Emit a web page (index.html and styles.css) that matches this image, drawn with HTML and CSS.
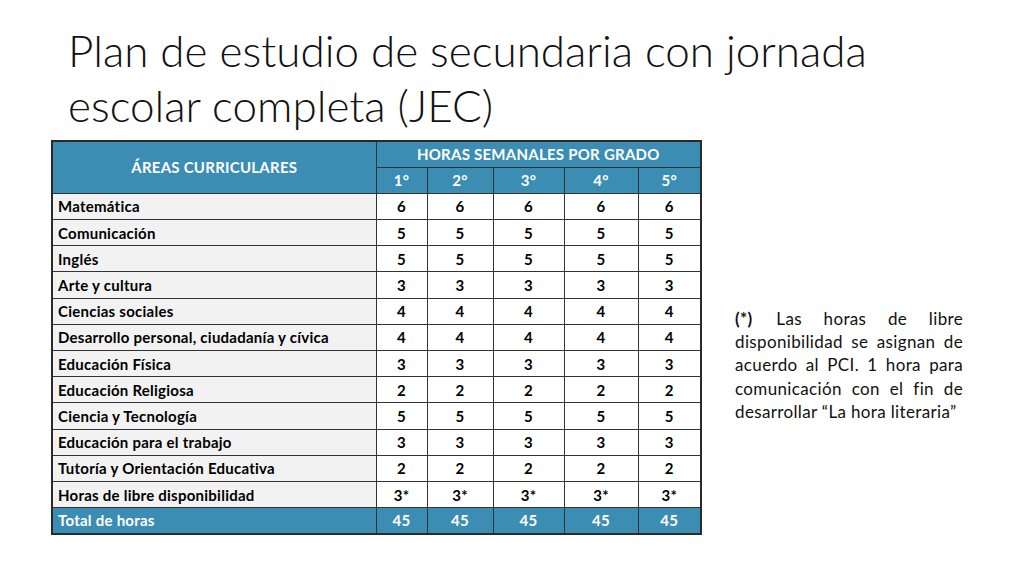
FILE: index.html
```html
<!DOCTYPE html>
<html lang="es">
<head>
<meta charset="utf-8">
<title>Plan de estudio JEC</title>
<link rel="stylesheet" href="styles.css">
</head>
<body>
<div class="slide">
  <h1 class="title">Plan de estudio de secundaria con jornada<br>escolar completa (JEC)</h1>
  <div class="content">
    <table class="plan">
      <colgroup>
        <col class="c-area"><col class="c1"><col class="c2"><col class="c3"><col class="c4"><col class="c5">
      </colgroup>
      <thead>
        <tr><th rowspan="2" class="h-area">ÁREAS CURRICULARES</th><th colspan="5">HORAS SEMANALES POR GRADO</th></tr>
        <tr><th>1°</th><th>2°</th><th>3°</th><th>4°</th><th>5°</th></tr>
      </thead>
      <tbody>
        <tr><td class="area">Matemática</td><td>6</td><td>6</td><td>6</td><td>6</td><td>6</td></tr>
        <tr><td class="area">Comunicación</td><td>5</td><td>5</td><td>5</td><td>5</td><td>5</td></tr>
        <tr><td class="area">Inglés</td><td>5</td><td>5</td><td>5</td><td>5</td><td>5</td></tr>
        <tr><td class="area">Arte y cultura</td><td>3</td><td>3</td><td>3</td><td>3</td><td>3</td></tr>
        <tr><td class="area">Ciencias sociales</td><td>4</td><td>4</td><td>4</td><td>4</td><td>4</td></tr>
        <tr><td class="area">Desarrollo personal, ciudadanía y cívica</td><td>4</td><td>4</td><td>4</td><td>4</td><td>4</td></tr>
        <tr><td class="area">Educación Física</td><td>3</td><td>3</td><td>3</td><td>3</td><td>3</td></tr>
        <tr><td class="area">Educación Religiosa</td><td>2</td><td>2</td><td>2</td><td>2</td><td>2</td></tr>
        <tr><td class="area">Ciencia y Tecnología</td><td>5</td><td>5</td><td>5</td><td>5</td><td>5</td></tr>
        <tr><td class="area">Educación para el trabajo</td><td>3</td><td>3</td><td>3</td><td>3</td><td>3</td></tr>
        <tr><td class="area">Tutoría y Orientación Educativa</td><td>2</td><td>2</td><td>2</td><td>2</td><td>2</td></tr>
        <tr><td class="area">Horas de libre disponibilidad</td><td>3*</td><td>3*</td><td>3*</td><td>3*</td><td>3*</td></tr>
        <tr class="total"><td class="area">Total de horas</td><td>45</td><td>45</td><td>45</td><td>45</td><td>45</td></tr>
      </tbody>
    </table>
    <p class="note"><b class="mark">(*)</b> Las horas de libre disponibilidad se asignan de acuerdo al PCI. 1 hora para comunicación con el fin de desarrollar “La hora literaria”</p>
  </div>
</div>
</body>
</html>
```

FILE: styles.css
```css
html, body {
  margin: 0;
  padding: 0;
  background: #ffffff;
}
.slide {
  width: 1024px;
  height: 576px;
  box-sizing: border-box;
  padding: 23px 0 0 68px;
  font-family: "Lato", "Liberation Sans", sans-serif;
  color: #000;
}
.title {
  margin: 0;
  font-family: "Lato", sans-serif;
  font-weight: 300;
  font-size: 44px;
  line-height: 55px;
  color: #111;
  letter-spacing: 0;
}
.content {
  display: flex;
  align-items: flex-start;
  margin-left: -17px;
  margin-top: 7px;
}
.plan {
  border-collapse: collapse;
  table-layout: fixed;
  width: 649px;
  font-size: 15px;
  font-weight: 700;
  letter-spacing: 0.25px;
  border: 2px solid #2a2a2a;
}
.c-area { width: 324px; }
.c1 { width: 51px; }
.c2 { width: 66px; }
.c3 { width: 71px; }
.c4 { width: 74px; }
.c5 { width: 63px; }
.plan th, .plan td {
  border: 1px solid #333;
  height: 26.2px;
  padding: 0;
  box-sizing: border-box;
  text-align: center;
}
.plan th {
  background: #3c8db3;
  color: #fff;
  font-weight: 700;
  font-size: 15px;
}
.plan td.area {
  text-align: left;
  padding-left: 5px;
  background: #f2f2f2;
}
.plan tr.total td {
  background: #3c8db3;
  color: #fff;
}
.note {
  width: 228px;
  margin: 167px 0 0 33px;
  font-size: 17px;
  letter-spacing: 0.35px;
  line-height: 23.2px;
  text-align: justify;
  color: #111;
}
.mark {
  margin-right: 2px;
}
```
